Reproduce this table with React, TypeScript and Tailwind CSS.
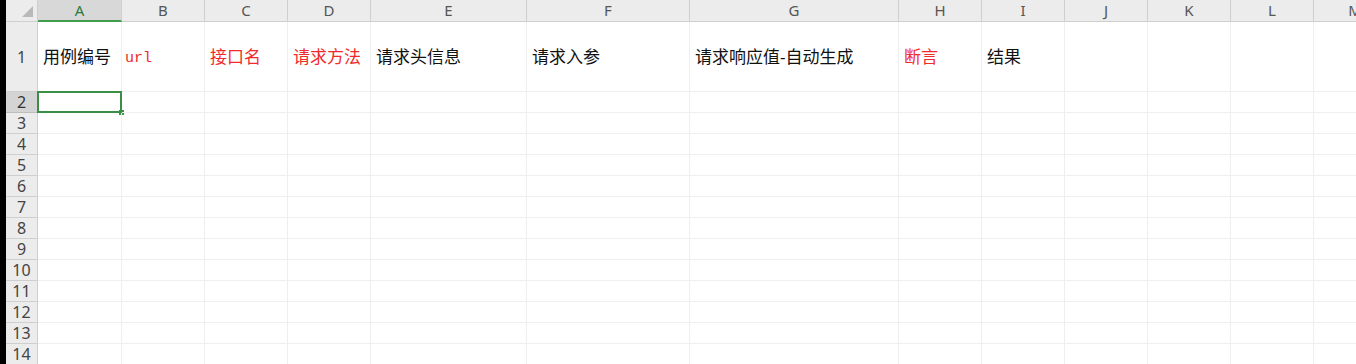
import React from "react";

const cols = [
  { key: "A", w: 84 },
  { key: "B", w: 83 },
  { key: "C", w: 83 },
  { key: "D", w: 83 },
  { key: "E", w: 156 },
  { key: "F", w: 163 },
  { key: "G", w: 209 },
  { key: "H", w: 83 },
  { key: "I", w: 83 },
  { key: "J", w: 83 },
  { key: "K", w: 83 },
  { key: "L", w: 83 },
  { key: "M", w: 83 },
];

const header: Record<string, { text: string; red?: boolean; mono?: boolean }> = {
  A: { text: "用例编号" },
  B: { text: "url", red: true, mono: true },
  C: { text: "接口名", red: true },
  D: { text: "请求方法", red: true },
  E: { text: "请求头信息" },
  F: { text: "请求入参" },
  G: { text: "请求响应值-自动生成" },
  H: { text: "断言", red: true },
  I: { text: "结果" },
};

const rows = [2, 3, 4, 5, 6, 7, 8, 9, 10, 11, 12, 13, 14];

export default function App() {
  return (
    <div
      className="flex h-[364px] w-[1356px] overflow-hidden bg-black"
      style={{ fontFamily: '"Noto Sans", "Noto Sans CJK SC", sans-serif' }}
    >
      <div className="ml-[6px] flex flex-col bg-white">
        {/* column header row */}
        <div className="flex h-[22px] shrink-0 bg-[#ececec]">
          <div className="flex w-[32px] shrink-0 items-end justify-end border-r border-b border-[#cfcfcf] pr-[4px] pb-[4px]">
            <svg width="11" height="11" viewBox="0 0 11 11" className="block">
              <path d="M11 0 L11 11 L0 11 Z" fill="#b9b9b9" />
            </svg>
          </div>
          {cols.map((c) => (
            <div
              key={c.key}
              style={{ width: c.w }}
              className={
                c.key === "A"
                  ? "flex shrink-0 items-center justify-center border-r border-b-2 border-r-[#cfcfcf] border-b-[#3f9d4c] bg-[#d8d8d8] text-[15px] text-[#2d7a3b]"
                  : "flex shrink-0 items-center justify-center border-r border-b border-[#cfcfcf] text-[15px] text-[#555]"
              }
            >
              {c.key}
            </div>
          ))}
        </div>

        {/* row 1 */}
        <div className="flex h-[70px] shrink-0">
          <div className="flex w-[32px] shrink-0 items-center justify-center border-r border-b border-[#cfcfcf] bg-[#ececec] text-[16px] text-[#444]">
            1
          </div>
          {cols.map((c) => {
            const h = header[c.key];
            return (
              <div
                key={c.key}
                style={{ width: c.w }}
                className={
                  h?.mono
                    ? "flex shrink-0 items-center overflow-visible whitespace-nowrap border-r border-b border-[#efefef] pl-[3px] text-[17px] leading-none"
                    : "flex shrink-0 items-center overflow-visible whitespace-nowrap border-r border-b border-[#efefef] pl-[5px] text-[17px] leading-none"
                }
              >
                {h ? (
                  <span
                    className={h.red ? "text-[#f02b2b]" : "text-[#111]"}
                    style={
                      h.mono
                        ? { fontFamily: '"Liberation Mono", monospace', fontSize: 15, position: "relative", top: 2 }
                        : undefined
                    }
                  >
                    {h.text}
                  </span>
                ) : null}
              </div>
            );
          })}
        </div>

        {/* rows 2-14 */}
        {rows.map((r) => (
          <div key={r} className="flex h-[21px] shrink-0">
            <div
              className={
                r === 2
                  ? "flex w-[32px] shrink-0 items-center justify-center border-r border-b border-[#bdbdbd] bg-[#d4d4d4] text-[16px] text-[#333]"
                  : "flex w-[32px] shrink-0 items-center justify-center border-r border-b border-[#cfcfcf] bg-[#ececec] text-[16px] text-[#444]"
              }
            >
              {r}
            </div>
            {cols.map((c) => (
              <div
                key={c.key}
                style={{ width: c.w }}
                className="relative shrink-0 border-r border-b border-[#efefef]"
              >
                {r === 2 && c.key === "A" ? (
                  <div className="absolute -top-[1px] -left-[1px] h-[22px] w-[85px] border-2 border-[#3a8f47]">
                    <div className="absolute -right-[4px] -bottom-[4px] h-[5px] w-[5px] bg-[#3a8f47]" />
                  </div>
                ) : null}
              </div>
            ))}
          </div>
        ))}
      </div>
    </div>
  );
}
